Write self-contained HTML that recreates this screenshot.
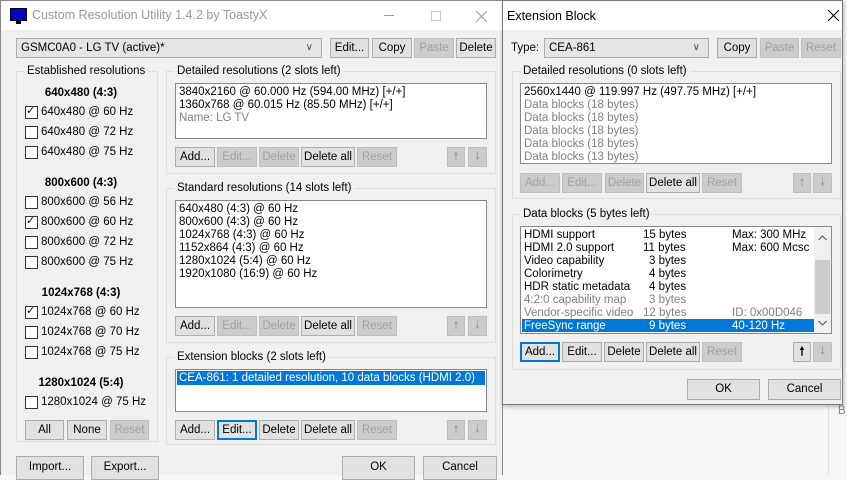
<!DOCTYPE html>
<html><head><meta charset="utf-8"><style>
*{box-sizing:border-box;margin:0;padding:0}
body{width:847px;height:475px;overflow:hidden;background:#f7f7f7;font-family:"Liberation Sans",sans-serif;font-size:11.5px;color:#000;position:relative}
.a{position:absolute}
.win{background:#f0f0f0}
.btn{position:absolute;height:20px;background:#e1e1e1;border:1px solid #adadad;text-align:center;line-height:18px;font-size:11.5px;white-space:nowrap}
.dis{color:#a0a0a0;border-color:#bfbfbf;background:#cccccc}
.foc{border:2px solid #0078d7;line-height:16px}
.grp{position:absolute;border:1px solid #dcdcdc}
.gl{position:absolute;background:#f0f0f0;padding:0 3px;top:-8px;left:7px;line-height:14px;white-space:nowrap}
.lb{position:absolute;background:#fff;border:1px solid #828790}
.ln{position:absolute;left:3px;line-height:13px;white-space:nowrap}
.g{color:#808080}
.cb{position:absolute;width:13px;height:13px;border:1px solid #333;background:#fff}
.lbl{position:absolute;white-space:nowrap;line-height:14px}
.hd{position:absolute;font-weight:bold;width:130px;text-align:center;line-height:14px}
.combo{position:absolute;height:20px;background:#e5e5e5;border:1px solid #adadad;line-height:18px;padding-left:4px}
.arr{position:absolute;right:8px;top:0;color:#555;font-size:10px}
</style></head><body>
<div class="a win" style="left:0;top:0;width:503px;height:475px;border-left:1px solid #888;border-right:1px solid #888"></div>
<div class="a" style="left:0;top:0;width:503px;height:30px;background:#fff;border:1px solid #888;border-bottom:none"></div>
<div class="a" style="left:10px;top:8px;width:17px;height:13px;background:#0000c8;border:1px solid #000"></div>
<div class="a" style="left:16px;top:21px;width:5px;height:3px;background:#000"></div>
<div class="lbl" style="left:32px;top:8px;font-size:12.5px;color:#999">Custom Resolution Utility 1.4.2 by ToastyX</div>
<div class="a" style="left:384px;top:15px;width:10px;height:1px;background:#999"></div>
<div class="a" style="left:431px;top:11px;width:10px;height:10px;border:1px solid #ccc"></div>
<svg class="a" style="left:476px;top:11px" width="11" height="11"><path d="M0 0L11 11M11 0L0 11" stroke="#999" stroke-width="1"/></svg>

<div class="combo" style="left:16px;top:38px;width:306px">GSMC0A0 - LG TV (active)*<span class="arr">∨</span></div>
<div class="btn" style="left:330px;top:38px;width:39px">Edit...</div>
<div class="btn" style="left:372px;top:38px;width:40px">Copy</div>
<div class="btn dis" style="left:414px;top:38px;width:40px">Paste</div>
<div class="btn" style="left:456px;top:38px;width:40px">Delete</div>

<div class="grp" style="left:16px;top:71px;width:142px;height:371px"><div class="gl">Established resolutions</div></div>
<div class="hd" style="left:16px;top:86px">640x480 (4:3)</div>
<div class="cb" style="left:25px;top:106px"></div><div class="lbl" style="left:26px;top:104px;font-size:11px">✓</div><div class="lbl" style="left:41px;top:105px">640x480 @ 60 Hz</div>
<div class="cb" style="left:25px;top:126px"></div><div class="lbl" style="left:41px;top:125px">640x480 @ 72 Hz</div>
<div class="cb" style="left:25px;top:146px"></div><div class="lbl" style="left:41px;top:145px">640x480 @ 75 Hz</div>
<div class="hd" style="left:16px;top:176px">800x600 (4:3)</div>
<div class="cb" style="left:25px;top:196px"></div><div class="lbl" style="left:41px;top:195px">800x600 @ 56 Hz</div>
<div class="cb" style="left:25px;top:216px"></div><div class="lbl" style="left:26px;top:214px;font-size:11px">✓</div><div class="lbl" style="left:41px;top:215px">800x600 @ 60 Hz</div>
<div class="cb" style="left:25px;top:236px"></div><div class="lbl" style="left:41px;top:235px">800x600 @ 72 Hz</div>
<div class="cb" style="left:25px;top:256px"></div><div class="lbl" style="left:41px;top:255px">800x600 @ 75 Hz</div>
<div class="hd" style="left:16px;top:286px">1024x768 (4:3)</div>
<div class="cb" style="left:25px;top:306px"></div><div class="lbl" style="left:26px;top:304px;font-size:11px">✓</div><div class="lbl" style="left:41px;top:305px">1024x768 @ 60 Hz</div>
<div class="cb" style="left:25px;top:326px"></div><div class="lbl" style="left:41px;top:325px">1024x768 @ 70 Hz</div>
<div class="cb" style="left:25px;top:346px"></div><div class="lbl" style="left:41px;top:345px">1024x768 @ 75 Hz</div>
<div class="hd" style="left:16px;top:376px">1280x1024 (5:4)</div>
<div class="cb" style="left:25px;top:396px"></div><div class="lbl" style="left:41px;top:395px">1280x1024 @ 75 Hz</div>
<div class="btn" style="left:25px;top:420px;width:39px">All</div>
<div class="btn" style="left:67px;top:420px;width:40px">None</div>
<div class="btn dis" style="left:110px;top:420px;width:39px">Reset</div>

<div class="grp" style="left:166px;top:71px;width:330px;height:103px"><div class="gl">Detailed resolutions (2 slots left)</div></div>
<div class="lb" style="left:175px;top:83px;width:312px;height:56px">
<div class="ln" style="top:2px">3840x2160 @ 60.000 Hz (594.00 MHz) [+/+]</div>
<div class="ln" style="top:15px">1360x768 @ 60.015 Hz (85.50 MHz) [+/+]</div>
<div class="ln g" style="top:28px">Name: LG TV</div></div>
<div class="btn" style="left:175px;top:147px;width:40px">Add...</div>
<div class="btn dis" style="left:217px;top:147px;width:40px">Edit...</div>
<div class="btn dis" style="left:259px;top:147px;width:40px">Delete</div>
<div class="btn" style="left:301px;top:147px;width:54px">Delete all</div>
<div class="btn dis" style="left:357px;top:147px;width:40px">Reset</div>
<div class="btn dis" style="left:447px;top:147px;width:18px">🠕</div>
<div class="btn dis" style="left:468px;top:147px;width:19px">🠗</div>

<div class="grp" style="left:166px;top:188px;width:330px;height:155px"><div class="gl">Standard resolutions (14 slots left)</div></div>
<div class="lb" style="left:175px;top:200px;width:312px;height:108px">
<div class="ln" style="top:2px">640x480 (4:3) @ 60 Hz</div>
<div class="ln" style="top:15px">800x600 (4:3) @ 60 Hz</div>
<div class="ln" style="top:28px">1024x768 (4:3) @ 60 Hz</div>
<div class="ln" style="top:41px">1152x864 (4:3) @ 60 Hz</div>
<div class="ln" style="top:54px">1280x1024 (5:4) @ 60 Hz</div>
<div class="ln" style="top:67px">1920x1080 (16:9) @ 60 Hz</div></div>
<div class="btn" style="left:175px;top:316px;width:40px">Add...</div>
<div class="btn dis" style="left:217px;top:316px;width:40px">Edit...</div>
<div class="btn dis" style="left:259px;top:316px;width:40px">Delete</div>
<div class="btn" style="left:301px;top:316px;width:54px">Delete all</div>
<div class="btn dis" style="left:357px;top:316px;width:40px">Reset</div>
<div class="btn dis" style="left:447px;top:316px;width:18px">🠕</div>
<div class="btn dis" style="left:468px;top:316px;width:19px">🠗</div>

<div class="grp" style="left:166px;top:357px;width:330px;height:88px"><div class="gl">Extension blocks (2 slots left)</div></div>
<div class="lb" style="left:175px;top:369px;width:312px;height:43px">
<div class="a" style="left:1px;top:1px;width:308px;height:14px;background:#0078d7"></div>
<div class="ln" style="top:2px;color:#fff">CEA-861: 1 detailed resolution, 10 data blocks (HDMI 2.0)</div></div>
<div class="btn" style="left:175px;top:420px;width:40px">Add...</div>
<div class="btn foc" style="left:217px;top:420px;width:40px">Edit...</div>
<div class="btn" style="left:259px;top:420px;width:40px">Delete</div>
<div class="btn" style="left:301px;top:420px;width:54px">Delete all</div>
<div class="btn dis" style="left:357px;top:420px;width:40px">Reset</div>
<div class="btn dis" style="left:447px;top:420px;width:18px">🠕</div>
<div class="btn dis" style="left:468px;top:420px;width:19px">🠗</div>

<div class="btn" style="left:16px;top:456px;width:68px;height:24px;line-height:20px">Import...</div>
<div class="btn" style="left:91px;top:456px;width:68px;height:24px;line-height:20px">Export...</div>
<div class="btn" style="left:342px;top:456px;width:73px;height:24px;line-height:20px">OK</div>
<div class="btn" style="left:423px;top:456px;width:74px;height:24px;line-height:20px">Cancel</div>

<div class="a" style="left:828px;top:404px;width:1px;height:71px;background:#e0e0e0"></div>
<div class="lbl" style="left:838px;top:404px;color:#888">B</div>

<div class="a win" style="left:502px;top:0;width:341px;height:405px;border:1px solid #777;box-shadow:1px 2px 4px rgba(0,0,0,.25)"></div>
<div class="a" style="left:503px;top:1px;width:339px;height:29px;background:#fff"></div>
<div class="lbl" style="left:507px;top:9px;font-size:12.5px">Extension Block</div>
<svg class="a" style="left:828px;top:10px" width="11" height="11"><path d="M0 0L11 11M11 0L0 11" stroke="#000" stroke-width="1"/></svg>
<div class="lbl" style="left:511px;top:41px">Type:</div>
<div class="combo" style="left:544px;top:38px;width:165px">CEA-861<span class="arr">∨</span></div>
<div class="btn" style="left:717px;top:38px;width:40px">Copy</div>
<div class="btn dis" style="left:760px;top:38px;width:39px">Paste</div>
<div class="btn dis" style="left:801px;top:38px;width:40px">Reset</div>

<div class="grp" style="left:512px;top:71px;width:329px;height:128px"><div class="gl">Detailed resolutions (0 slots left)</div></div>
<div class="lb" style="left:520px;top:83px;width:312px;height:81px">
<div class="ln" style="top:2px">2560x1440 @ 119.997 Hz (497.75 MHz) [+/+]</div>
<div class="ln g" style="top:15px">Data blocks (18 bytes)</div>
<div class="ln g" style="top:28px">Data blocks (18 bytes)</div>
<div class="ln g" style="top:41px">Data blocks (18 bytes)</div>
<div class="ln g" style="top:54px">Data blocks (18 bytes)</div>
<div class="ln g" style="top:67px">Data blocks (13 bytes)</div></div>
<div class="btn dis" style="left:520px;top:173px;width:40px">Add...</div>
<div class="btn dis" style="left:562px;top:173px;width:40px">Edit...</div>
<div class="btn dis" style="left:605px;top:173px;width:39px">Delete</div>
<div class="btn" style="left:646px;top:173px;width:54px">Delete all</div>
<div class="btn dis" style="left:702px;top:173px;width:40px">Reset</div>
<div class="btn dis" style="left:793px;top:173px;width:18px">🠕</div>
<div class="btn dis" style="left:813px;top:173px;width:19px">🠗</div>

<div class="grp" style="left:512px;top:214px;width:329px;height:156px"><div class="gl">Data blocks (5 bytes left)</div></div>
<div class="lb" style="left:520px;top:226px;width:312px;height:108px">
<div class="a" style="left:1px;top:92px;width:292px;height:13px;background:#0078d7"></div>
<div class="ln" style="top:2px">HDMI support</div><div class="ln" style="top:2px;left:122px">15 bytes</div><div class="ln" style="top:2px;left:211px">Max: 300 MHz</div>
<div class="ln" style="top:15px">HDMI 2.0 support</div><div class="ln" style="top:15px;left:122px">11 bytes</div><div class="ln" style="top:15px;left:211px">Max: 600 Mcsc</div>
<div class="ln" style="top:28px">Video capability</div><div class="ln" style="top:28px;left:128px">3 bytes</div>
<div class="ln" style="top:41px">Colorimetry</div><div class="ln" style="top:41px;left:128px">4 bytes</div>
<div class="ln" style="top:54px">HDR static metadata</div><div class="ln" style="top:54px;left:128px">4 bytes</div>
<div class="ln g" style="top:67px">4:2:0 capability map</div><div class="ln g" style="top:67px;left:128px">3 bytes</div>
<div class="ln g" style="top:80px">Vendor-specific video</div><div class="ln g" style="top:80px;left:122px">12 bytes</div><div class="ln g" style="top:80px;left:211px">ID: 0x00D046</div>
<div class="ln" style="top:93px;color:#fff">FreeSync range</div><div class="ln" style="top:93px;left:128px;color:#fff">9 bytes</div><div class="ln" style="top:93px;left:211px;color:#fff">40-120 Hz</div>
<div class="a" style="left:293px;top:0;width:17px;height:106px;background:#f0f0f0"></div>
<div class="a" style="left:294px;top:33px;width:15px;height:54px;background:#cdcdcd"></div>
<svg class="a" style="left:297px;top:8px" width="9" height="6"><path d="M0.5 5L4.5 1L8.5 5" stroke="#555" fill="none"/></svg>
<svg class="a" style="left:297px;top:93px" width="9" height="6"><path d="M0.5 1L4.5 5L8.5 1" stroke="#555" fill="none"/></svg></div>
<div class="btn foc" style="left:520px;top:342px;width:40px">Add...</div>
<div class="btn" style="left:562px;top:342px;width:40px">Edit...</div>
<div class="btn" style="left:604px;top:342px;width:40px">Delete</div>
<div class="btn" style="left:646px;top:342px;width:54px">Delete all</div>
<div class="btn dis" style="left:702px;top:342px;width:40px">Reset</div>
<div class="btn" style="left:793px;top:342px;width:18px;font-weight:bold">🠕</div>
<div class="btn dis" style="left:813px;top:342px;width:19px">🠗</div>
<div class="btn" style="left:687px;top:379px;width:73px;height:21px">OK</div>
<div class="btn" style="left:768px;top:379px;width:73px;height:21px">Cancel</div>
</body></html>
